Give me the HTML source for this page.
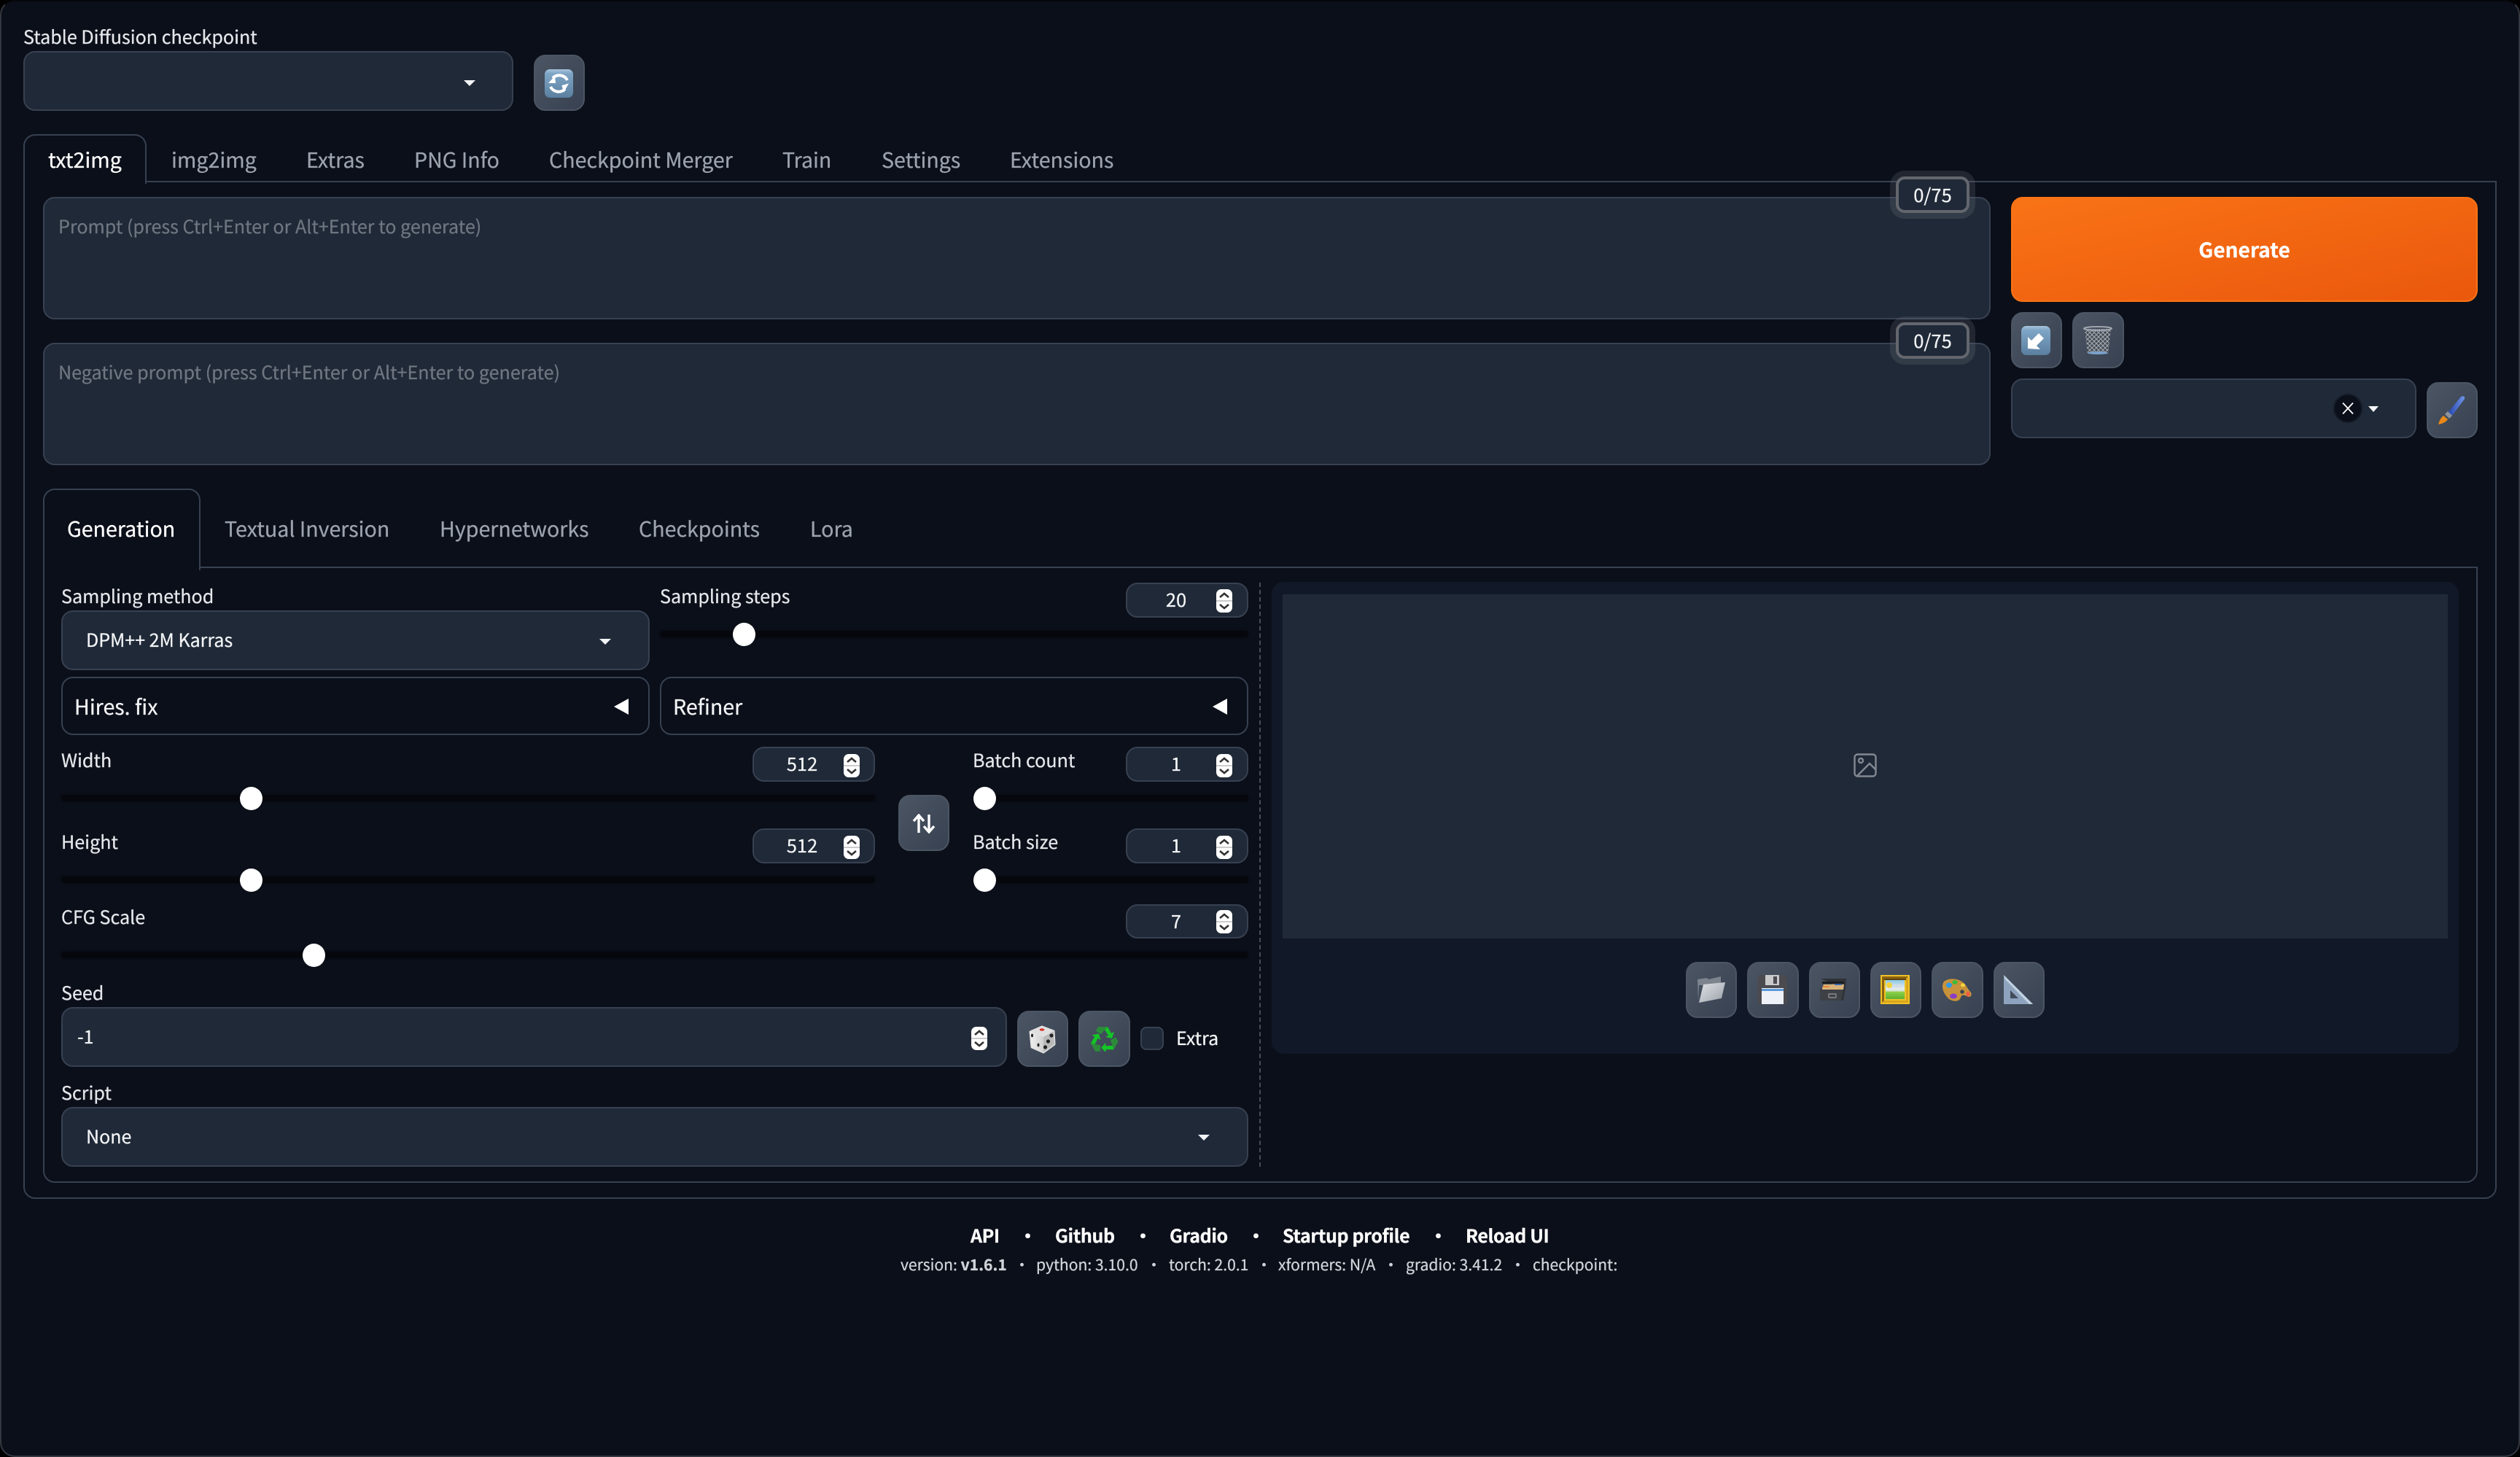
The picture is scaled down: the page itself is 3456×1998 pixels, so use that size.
<!DOCTYPE html>
<html><head><meta charset="utf-8"><title>Stable Diffusion</title>
<style>
html,body{margin:0;padding:0;background:#000}
#w{position:relative;width:3456px;height:1998px;overflow:hidden;background:#0b0f19;border-radius:20px;font-family:"Noto Sans CJK SC","Liberation Sans",sans-serif;color:#f3f4f6;box-sizing:border-box;border:2px solid #34373f;border-top-color:#05070b;-webkit-text-stroke:.25px currentColor}
#a{position:absolute;left:-2px;top:-2px;width:3456px;height:1998px}
#a>*{position:absolute;box-sizing:border-box}
.t{white-space:nowrap;line-height:40px;height:40px}
.l{font-size:25.100px;color:#e5e7eb}
.tb{font-size:28.600px;color:#9ca3af}
.tb.on{color:#fff}
.b{background:#1f2937;border:2px solid #374151;border-radius:16px}
.o{border:2px solid #374151;border-radius:16px}
.btn{background:linear-gradient(to bottom right,#4b5563,#374151);border:2px solid #4b5563;border-radius:16px}
.c{width:0;height:0;border-left:8px solid transparent;border-right:8px solid transparent;border-top:8px solid #f3f4f6}
.tr{background:#05070d;border-radius:5px;height:9px;box-shadow:0 0 3px #070a11}
.th{background:#fff;border-radius:50%;width:31px;height:32px}
.n{text-align:center;font-size:25.500px;color:#f3f4f6}
.tri{width:0;height:0;border-top:11px solid transparent;border-bottom:11px solid transparent;border-right:20px solid #fff}
.cnt{background:#1f2937;border:4px solid #63666d;border-radius:12px;box-shadow:0 0 0 8px rgba(120,125,135,.22);width:101px;height:50px;text-align:center;line-height:42px;font-size:25.500px;color:#f3f4f6}
.ft{font-size:25px;font-weight:700;color:#fff;letter-spacing:-.4px}
.fv{font-size:21.100px;color:#d1d5db}
.d{font-size:21px;color:#d1d5db}
svg{display:block}
</style></head><body><div id="w"><div id="a">

<svg width="0" height="0" style="position:absolute"><defs>
<linearGradient id="bl" x1="0" y1="0" x2="0" y2="1"><stop offset="0" stop-color="#a8c4dc"/><stop offset=".15" stop-color="#7fa5c6"/><stop offset="1" stop-color="#5a7f9f"/></linearGradient>
<symbol id="sp" viewBox="0 0 22 32"><rect width="22" height="32" rx="7" fill="#fff"/><rect y="15" width="22" height="2" fill="#ccc"/><path d="M5 11l6-5 6 5" fill="none" stroke="#333" stroke-width="2.6"/><path d="M5 21l6 5 6-5" fill="none" stroke="#333" stroke-width="2.6"/></symbol>
</defs></svg>

<div class="t l" style="left:32px;top:30px">Stable Diffusion checkpoint</div>
<div class="b" style="left:32px;top:70px;width:672px;height:82px"></div>
<div class="c" style="left:636px;top:110px"></div>
<div class="btn" style="left:732px;top:75px;width:70px;height:77px"></div>
<svg style="left:747px;top:95px" width="39" height="39" viewBox="0 0 39 39"><rect width="39" height="39" rx="7" fill="url(#bl)"/><path d="M31 15A12.5 12.5 0 0 0 11 12" fill="none" stroke="#fff" stroke-width="4"/><path d="M5 19l10 0-1-10z" fill="#fff"/><path d="M8 24a12.5 12.5 0 0 0 20 3" fill="none" stroke="#fff" stroke-width="4"/><path d="M34 20l-10 1 1 10z" fill="#fff" transform="rotate(-10 30 25)"/></svg>

<!-- top tabs -->
<div class="o" style="left:32px;top:248px;width:3392px;height:1396px;border-radius:0 0 16px 16px"></div>
<div style="left:32px;top:184px;width:169px;height:68px;background:#0b0f19;border:2px solid #374151;border-bottom:none;border-radius:16px 16px 0 0"></div>
<div class="t tb on" style="left:66px;top:199px">txt2img</div>
<div class="t tb" style="left:235px;top:199px">img2img</div>
<div class="t tb" style="left:420px;top:199px">Extras</div>
<div class="t tb" style="left:568px;top:199px">PNG Info</div>
<div class="t tb" style="left:753px;top:199px">Checkpoint Merger</div>
<div class="t tb" style="left:1073px;top:199px">Train</div>
<div class="t tb" style="left:1209px;top:199px">Settings</div>
<div class="t tb" style="left:1385px;top:199px">Extensions</div>

<!-- prompts -->
<div class="b" style="left:59px;top:270px;width:2671px;height:168px"></div>
<div class="t" style="left:80px;top:290px;font-size:25.100px;color:#6f7681">Prompt (press Ctrl+Enter or Alt+Enter to generate)</div>
<div class="cnt" style="left:2600px;top:242px">0/75</div>
<div class="b" style="left:59px;top:470px;width:2671px;height:168px"></div>
<div class="t" style="left:80px;top:490px;font-size:25.100px;color:#6f7681">Negative prompt (press Ctrl+Enter or Alt+Enter to generate)</div>
<div class="cnt" style="left:2600px;top:442px">0/75</div>

<!-- right column -->
<div style="left:2758px;top:270px;width:640px;height:144px;border-radius:16px;background:linear-gradient(to bottom right,#f97316,#ea580c);border:2px solid #f97316;text-align:center;line-height:140px;font-size:28px;font-weight:700;color:#fff">Generate</div>
<div class="btn" style="left:2758px;top:428px;width:70px;height:77px"></div>
<svg style="left:2772px;top:447px" width="40" height="40" viewBox="0 0 40 40"><rect width="40" height="40" rx="7" fill="url(#bl)"/><path d="M9 31V15l5 5 10-10 7 7-10 10 5 5z" fill="#fff"/></svg>
<div class="btn" style="left:2842px;top:428px;width:71px;height:77px"></div>
<svg style="left:2857px;top:447px" width="40" height="40" viewBox="0 0 40 40"><defs><pattern id="m" width="6" height="6" patternUnits="userSpaceOnUse"><path d="M0 0l6 6M6 0L0 6" stroke="#a5abb3" stroke-width="1.100"/></pattern></defs><path d="M2 4h36l-4 34H6z" fill="#444a53"/><path d="M2 4h36l-4 34H6z" fill="url(#m)"/><ellipse cx="20" cy="3.500" rx="19" ry="2.500" fill="none" stroke="#a0a6ad" stroke-width="2"/><ellipse cx="20" cy="37" rx="14" ry="2" fill="#7aa2cc"/></svg>
<div class="b" style="left:2758px;top:519px;width:556px;height:82px"></div>
<div style="left:3200px;top:540px;width:40px;height:40px;border-radius:50%;background:#0b0f19;border:2px solid #141b28"></div>
<svg style="left:3211px;top:551px" width="18" height="18" viewBox="0 0 18 18"><path d="M2 1.500l14 15M16 1.500L2 16.500" stroke="#fff" stroke-width="1.800"/></svg>
<div class="c" style="left:3248px;top:557px;border-left-width:7px;border-right-width:7px"></div>
<div class="btn" style="left:3328px;top:524px;width:70px;height:77px"></div>
<svg style="left:3342px;top:542px" width="40" height="40" viewBox="0 0 40 40"><defs><linearGradient id="br" x1="0" y1="0" x2="1" y2="0"><stop offset="0" stop-color="#1f3fa8"/><stop offset="1" stop-color="#6f95ea"/></linearGradient></defs><path d="M14 25L33 2c3-2 6 0 5 3L20 29z" fill="url(#br)"/><path d="M11 26l4-4 6 6-4 4z" fill="#8d9299"/><path d="M9 28l6 5c-2 3-6 6-13 7 1-4 3-9 7-12z" fill="#e8891a"/></svg>

<!-- inner tabs -->
<div class="o" style="left:59px;top:777px;width:3339px;height:845px;border-radius:0 0 16px 16px"></div>
<div style="left:59px;top:670px;width:216px;height:112px;background:#0b0f19;border:2px solid #374151;border-bottom:none;border-radius:16px 16px 0 0"></div>
<div class="t tb on" style="left:92px;top:705px">Generation</div>
<div class="t tb" style="left:308px;top:705px">Textual Inversion</div>
<div class="t tb" style="left:603px;top:705px">Hypernetworks</div>
<div class="t tb" style="left:876px;top:705px">Checkpoints</div>
<div class="t tb" style="left:1111px;top:705px">Lora</div>

<!-- left controls -->
<div class="t l" style="left:84px;top:797px">Sampling method</div>
<div class="b" style="left:84px;top:837px;width:807px;height:82px"></div>
<div class="t" style="left:118px;top:857px;font-size:25px;color:#f3f4f6">DPM++ 2M Karras</div>
<div class="c" style="left:822px;top:876px"></div>
<div class="t l" style="left:905px;top:797px">Sampling steps</div>
<div class="b" style="left:1544px;top:799px;width:168px;height:48px"></div>
<div class="t n" style="left:1580px;top:802px;width:66px">20</div>
<svg style="left:1668px;top:808px" width="22" height="32"><use href="#sp"/></svg>
<div class="tr" style="left:905px;top:865px;width:807px"></div>
<div class="th" style="left:1005px;top:854px"></div>

<div class="o" style="left:84px;top:928px;width:807px;height:80px"></div>
<div class="t" style="left:102px;top:949px;font-size:28.600px;color:#f3f4f6">Hires. fix</div>
<div class="tri" style="left:842px;top:958px"></div>
<div class="o" style="left:905px;top:928px;width:807px;height:80px"></div>
<div class="t" style="left:923px;top:949px;font-size:28.600px;color:#f3f4f6">Refiner</div>
<div class="tri" style="left:1663px;top:958px"></div>

<div class="t l" style="left:84px;top:1022px">Width</div>
<div class="b" style="left:1032px;top:1024px;width:168px;height:48px"></div>
<div class="t n" style="left:1067px;top:1027px;width:66px">512</div>
<svg style="left:1157px;top:1034px" width="22" height="32"><use href="#sp"/></svg>
<div class="tr" style="left:84px;top:1090px;width:1116px"></div>
<div class="th" style="left:329px;top:1079px"></div>

<div class="t l" style="left:84px;top:1134px">Height</div>
<div class="b" style="left:1032px;top:1136px;width:168px;height:48px"></div>
<div class="t n" style="left:1067px;top:1139px;width:66px">512</div>
<svg style="left:1157px;top:1146px" width="22" height="32"><use href="#sp"/></svg>
<div class="tr" style="left:84px;top:1202px;width:1116px"></div>
<div class="th" style="left:329px;top:1191px"></div>

<div class="btn" style="left:1232px;top:1090px;width:70px;height:77px"></div>
<svg style="left:1251px;top:1116px" width="32" height="27" viewBox="0 0 32 27"><path d="M9 26V4M2 10l7-8 7 8" fill="none" stroke="#fff" stroke-width="3.400"/><path d="M23 1v22M16 17l7 8 7-8" fill="none" stroke="#fff" stroke-width="3.400"/></svg>

<div class="t l" style="left:1334px;top:1022px">Batch count</div>
<div class="b" style="left:1544px;top:1024px;width:168px;height:48px"></div>
<div class="t n" style="left:1580px;top:1027px;width:66px">1</div>
<svg style="left:1668px;top:1034px" width="22" height="32"><use href="#sp"/></svg>
<div class="tr" style="left:1335px;top:1090px;width:377px"></div>
<div class="th" style="left:1335px;top:1079px"></div>

<div class="t l" style="left:1334px;top:1134px">Batch size</div>
<div class="b" style="left:1544px;top:1136px;width:168px;height:48px"></div>
<div class="t n" style="left:1580px;top:1139px;width:66px">1</div>
<svg style="left:1668px;top:1146px" width="22" height="32"><use href="#sp"/></svg>
<div class="tr" style="left:1335px;top:1202px;width:377px"></div>
<div class="th" style="left:1335px;top:1191px"></div>

<div class="t l" style="left:84px;top:1237px">CFG Scale</div>
<div class="b" style="left:1544px;top:1240px;width:168px;height:47px"></div>
<div class="t n" style="left:1580px;top:1243px;width:66px">7</div>
<svg style="left:1668px;top:1248px" width="22" height="32"><use href="#sp"/></svg>
<div class="tr" style="left:84px;top:1305px;width:1628px"></div>
<div class="th" style="left:415px;top:1294px"></div>

<div class="t l" style="left:84px;top:1341px">Seed</div>
<div class="b" style="left:84px;top:1381px;width:1297px;height:82px"></div>
<div class="t" style="left:106px;top:1401px;font-size:25px;color:#f3f4f6">-1</div>
<svg style="left:1332px;top:1408px" width="22" height="32"><use href="#sp"/></svg>
<div class="btn" style="left:1395px;top:1386px;width:70px;height:77px"></div>
<svg style="left:1409px;top:1405px" width="40" height="40" viewBox="0 0 40 40"><defs><linearGradient id="dc" x1="0" y1="0" x2="1" y2="0"><stop offset="0" stop-color="#f0f0f0"/><stop offset="1" stop-color="#cfcfcf"/></linearGradient></defs><path d="M4 10L20 3l16 6 1 18-15 11L6 31z" fill="#e0e0e0" stroke="#e0e0e0" stroke-width="3" stroke-linejoin="round"/><path d="M4 10l18 7v21L6 31z" fill="url(#dc)"/><path d="M22 17l14-8 1 18-15 11z" fill="#b9b9b9"/><ellipse cx="20" cy="7" rx="3.400" ry="1.800" fill="#d8342c"/><ellipse cx="6.500" cy="15" rx="1.500" ry="2.400" fill="#222"/><ellipse cx="15" cy="28" rx="1.500" ry="2.400" fill="#222"/><circle cx="33" cy="15" r="2.600" fill="#222"/><circle cx="28.500" cy="23" r="2.600" fill="#222"/><circle cx="24.500" cy="31" r="2.600" fill="#222"/></svg>
<div class="btn" style="left:1479px;top:1386px;width:71px;height:77px"></div>
<svg style="left:1495px;top:1406px" width="38" height="36" viewBox="0 0 38 36"><g><path d="M11 2h13l5 9 4-2-3 9-9-2 4-2-5-8-5 6-7-4z" fill="#14c526"/><path d="M11 2h13l-4 4-5 6-7-4z" fill="#2d8a3a"/></g><g transform="rotate(120 19 20)"><path d="M11 2h13l5 9 4-2-3 9-9-2 4-2-5-8-5 6-7-4z" fill="#14c526"/><path d="M11 2h13l-4 4-5 6-7-4z" fill="#2d8a3a"/></g><g transform="rotate(240 19 20)"><path d="M11 2h13l5 9 4-2-3 9-9-2 4-2-5-8-5 6-7-4z" fill="#14c526"/><path d="M11 2h13l-4 4-5 6-7-4z" fill="#2d8a3a"/></g></svg>
<div class="b" style="left:1564px;top:1408px;width:32px;height:32px;border-radius:8px"></div>
<div class="t" style="left:1613px;top:1403px;font-size:25px;color:#f3f4f6">Extra</div>

<div class="t l" style="left:84px;top:1478px">Script</div>
<div class="b" style="left:84px;top:1518px;width:1628px;height:82px"></div>
<div class="t" style="left:118px;top:1538px;font-size:25px;color:#f3f4f6">None</div>
<div class="c" style="left:1643px;top:1556px"></div>

<div style="left:1727px;top:799px;width:0;height:801px;border-left:2px dashed #474c57"></div>

<!-- output -->
<div style="left:1744px;top:798px;width:1628px;height:647px;background:#111827;border-radius:16px"></div>
<div style="left:1759px;top:815px;width:1598px;height:472px;background:#1f2937"></div>
<svg style="left:2542px;top:1033px" width="32" height="33" viewBox="0 0 32 33" fill="none" stroke="#838892" stroke-width="2.400"><rect x="1.500" y="1.500" width="29" height="30" rx="4"/><circle cx="10" cy="10" r="3"/><path d="M5 31L22 14l9 9"/></svg>

<div class="btn" style="left:2312px;top:1319px;width:70px;height:77px"></div>
<svg style="left:2327px;top:1338px" width="39" height="37" viewBox="0 0 39 37"><defs><linearGradient id="f" x1="0" y1="0" x2="1" y2="1"><stop offset="0" stop-color="#e2e5e9"/><stop offset="1" stop-color="#9aa0a8"/></linearGradient></defs><path d="M1 5l13-2 2 2 17-4v12H3L2 35z" fill="#7e848d"/><path d="M9 12L39 9l-5 22-31 6z" fill="url(#f)"/></svg>
<div class="btn" style="left:2396px;top:1319px;width:71px;height:77px"></div>
<svg style="left:2411px;top:1337px" width="40" height="40" viewBox="0 0 40 40"><path d="M0 0h36l4 4v36H0z" fill="#4b4b4f"/><rect x="10" y="0" width="19" height="14" fill="#c9c9cc"/><rect x="21" y="2" width="5" height="10" fill="#4b4b4f"/><rect x="5" y="18" width="30" height="22" fill="#eef2f8"/><rect x="5" y="19" width="30" height="3" fill="#5c9ad8"/></svg>
<div class="btn" style="left:2481px;top:1319px;width:70px;height:77px"></div>
<svg style="left:2496px;top:1342px" width="36" height="30" viewBox="0 0 36 30"><path d="M1 0h35l-1 12-3 18H0V14h32z" fill="#2f3237"/><rect x="3" y="4" width="30" height="3" fill="#1b1d20"/><path d="M3 13l2-5h10l8-1 10 1-1 7H3z" fill="#d9b37a"/><rect x="4" y="10" width="9" height="2" fill="#e8883c"/><rect x="20" y="7" width="10" height="2" fill="#3a68b0"/><path d="M0 15h32l-3 15H0z" fill="#3d4045"/><rect x="12" y="21" width="10" height="5" rx="1" fill="none" stroke="#8a8d92" stroke-width="1.400"/></svg>
<div class="btn" style="left:2565px;top:1319px;width:70px;height:77px"></div>
<svg style="left:2579px;top:1337px" width="40" height="40" viewBox="0 0 40 40"><defs><linearGradient id="s" x1="0" y1="0" x2="0" y2="1"><stop offset="0" stop-color="#8cc9e8"/><stop offset=".45" stop-color="#e4ecf0"/><stop offset=".58" stop-color="#d4e2cc"/><stop offset=".62" stop-color="#8fd04a"/><stop offset="1" stop-color="#5cb030"/></linearGradient></defs><rect width="40" height="40" fill="#efc225"/><path d="M2 2h36l-3 3H5v30l-3 3z" fill="#8a6210"/><path d="M38 38H2l3-3h30V5l3-3z" fill="#d9a51c"/><rect x="7" y="7" width="26" height="26" fill="url(#s)"/><circle cx="12" cy="14" r="4" fill="#f2d33c"/><path d="M17 17l3-5 3 2 3-3 4 6z" fill="#d3dce4"/><rect x="5" y="5" width="30" height="2" fill="#5e430a"/></svg>
<div class="btn" style="left:2649px;top:1319px;width:71px;height:77px"></div>
<svg style="left:2664px;top:1342px" width="40" height="32" viewBox="0 0 40 32"><path d="M2 4C8-1 20-1 28 5c5 4 6 9 11 14 2 4-1 8-6 5-4-2-7-2-8 2-2 6-10 6-16 2C2 22-3 11 2 4z" fill="#c8923a"/><ellipse cx="9" cy="9" rx="4" ry="3.500" fill="#2f9be8"/><ellipse cx="17" cy="5" rx="3.500" ry="3" fill="#3ebc3a"/><ellipse cx="28" cy="9" rx="3" ry="2.500" fill="#f2d33c"/><ellipse cx="35" cy="21" rx="2.500" ry="3.500" fill="#ee5a42"/><ellipse cx="15" cy="24" rx="5" ry="3.500" fill="#8a3ec4"/><circle cx="27" cy="18" r="2.800" fill="#3d4450"/></svg>
<div class="btn" style="left:2734px;top:1319px;width:70px;height:77px"></div>
<svg style="left:2748px;top:1337px" width="40" height="40" viewBox="0 0 40 40"><path fill-rule="evenodd" d="M0 0l40 40H0zM9 21v11h11z" fill="#8ea3bd"/><path d="M0 0l40 40h-5L2 6z" fill="#c2d3e2"/></svg>

<!-- footer -->
<div class="t ft" style="left:1331px;top:1674px">API</div>
<div class="t ft" style="left:1397px;top:1674px">•</div>
<div class="t ft" style="left:1447px;top:1674px">Github</div>
<div class="t ft" style="left:1555px;top:1674px">•</div>
<div class="t ft" style="left:1604px;top:1674px">Gradio</div>
<div class="t ft" style="left:1710px;top:1674px">•</div>
<div class="t ft" style="left:1759px;top:1674px">Startup profile</div>
<div class="t ft" style="left:1960px;top:1674px">•</div>
<div class="t ft" style="left:2010px;top:1674px">Reload UI</div>

<div class="t fv" style="left:1235px;top:1714px">version: <b>v1.6.1</b></div>
<div class="t d" style="left:1391px;top:1714px">•</div>
<div class="t fv" style="left:1421px;top:1714px">python: 3.10.0</div>
<div class="t d" style="left:1572px;top:1714px">•</div>
<div class="t fv" style="left:1603px;top:1714px">torch: 2.0.1</div>
<div class="t d" style="left:1723px;top:1714px">•</div>
<div class="t fv" style="left:1753px;top:1714px">xformers: N/A</div>
<div class="t d" style="left:1897px;top:1714px">•</div>
<div class="t fv" style="left:1928px;top:1714px">gradio: 3.41.2</div>
<div class="t d" style="left:2071px;top:1714px">•</div>
<div class="t fv" style="left:2102px;top:1714px">checkpoint:</div>

</div></div></body></html>
